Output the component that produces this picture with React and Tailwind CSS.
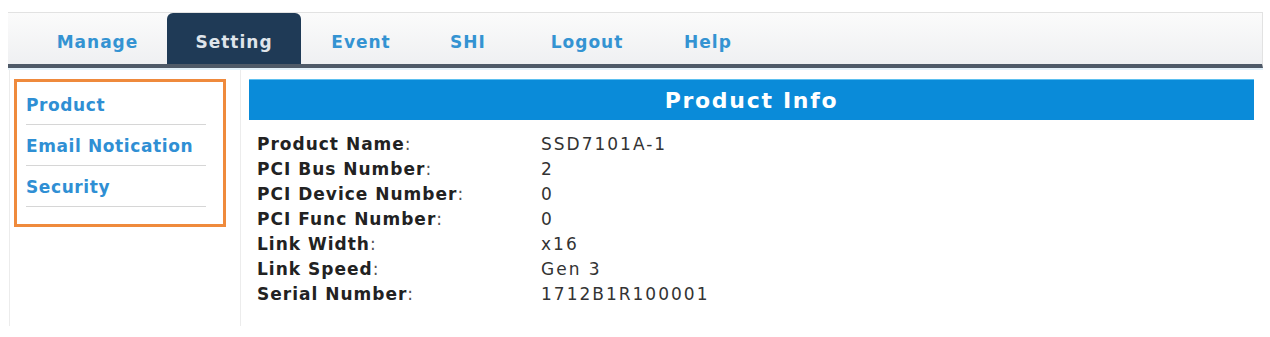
import React from 'react';

const tabs = [
  { label: 'Manage', w: 'w-[139px]' },
  { label: 'Setting', w: 'w-[134px]', active: true },
  { label: 'Event', w: 'w-[120px]' },
  { label: 'SHI', w: 'w-[94px]' },
  { label: 'Logout', w: 'w-[144px]' },
  { label: 'Help', w: 'w-[98px]' },
];

const menu = ['Product', 'Email Notication', 'Security'];

const info = [
  ['Product Name', 'SSD7101A-1'],
  ['PCI Bus Number', '2'],
  ['PCI Device Number', '0'],
  ['PCI Func Number', '0'],
  ['Link Width', 'x16'],
  ['Link Speed', 'Gen 3'],
  ['Serial Number', '1712B1R100001'],
];

const App = () => {
  return (
    <div className="w-[1270px] h-[337px] bg-white overflow-hidden font-['DejaVu_Sans',Verdana,sans-serif]">
      <div className="pt-[12px] pl-[8px] pr-[7px]">
        <div className="h-[56px] flex items-stretch border-t border-r border-[#e2e2e2] bg-gradient-to-b from-[#fbfbfb] to-[#eff0f2] border-b-[4px] border-b-[#4f5a68] pl-[20px]">
          {tabs.map((t) => (
            <div
              key={t.label}
              className={`${t.w} flex items-center justify-center pt-[8px] text-[17px] font-bold tracking-[1px] ${
                t.active ? 'bg-[#1f3a56] text-[#dfe4ea] rounded-t-[6px]' : 'text-[#3493d2]'
              }`}
            >
              {t.label}
            </div>
          ))}
        </div>
        <div className="h-[2px] bg-[#e3f1fa]" />
      </div>

      <div className="flex pl-[9px] h-[256px]">
        <div className="w-[232px] border-l border-r border-[#ececec] pl-[4px] pt-[9px]">
          <div className="w-[212px] h-[148px] border-[3px] border-[#ef8a3c] pl-[9px] pr-[17px] pt-[2px]">
            {menu.map((m) => (
              <div
                key={m}
                className="h-[41px] flex items-center pt-[3px] border-b border-[#d6d6d6] text-[17px] font-bold tracking-[0.6px] text-[#2f8fd4]"
              >
                {m}
              </div>
            ))}
          </div>
        </div>

        <div className="w-[1005px] ml-[8px] pt-[9px]">
          <div className="h-[41px] bg-[#0a8bd9] border-t border-[#5cc0f0] flex items-center justify-center text-white text-[22px] font-bold tracking-[1.7px]">
            Product Info
          </div>
          <div className="pt-[12px] pl-[8px]">
            {info.map(([k, v]) => (
              <div key={k} className="flex h-[25px] items-center text-[17px] text-[#222]">
                <div className="w-[284px] tracking-[1px]">
                  <span className="font-bold">{k}</span>
                  <span className="text-[#555]">:</span>
                </div>
                <div className="tracking-[2px] text-[#333]">{v}</div>
              </div>
            ))}
          </div>
        </div>
      </div>
    </div>
  );
};

export default App;
